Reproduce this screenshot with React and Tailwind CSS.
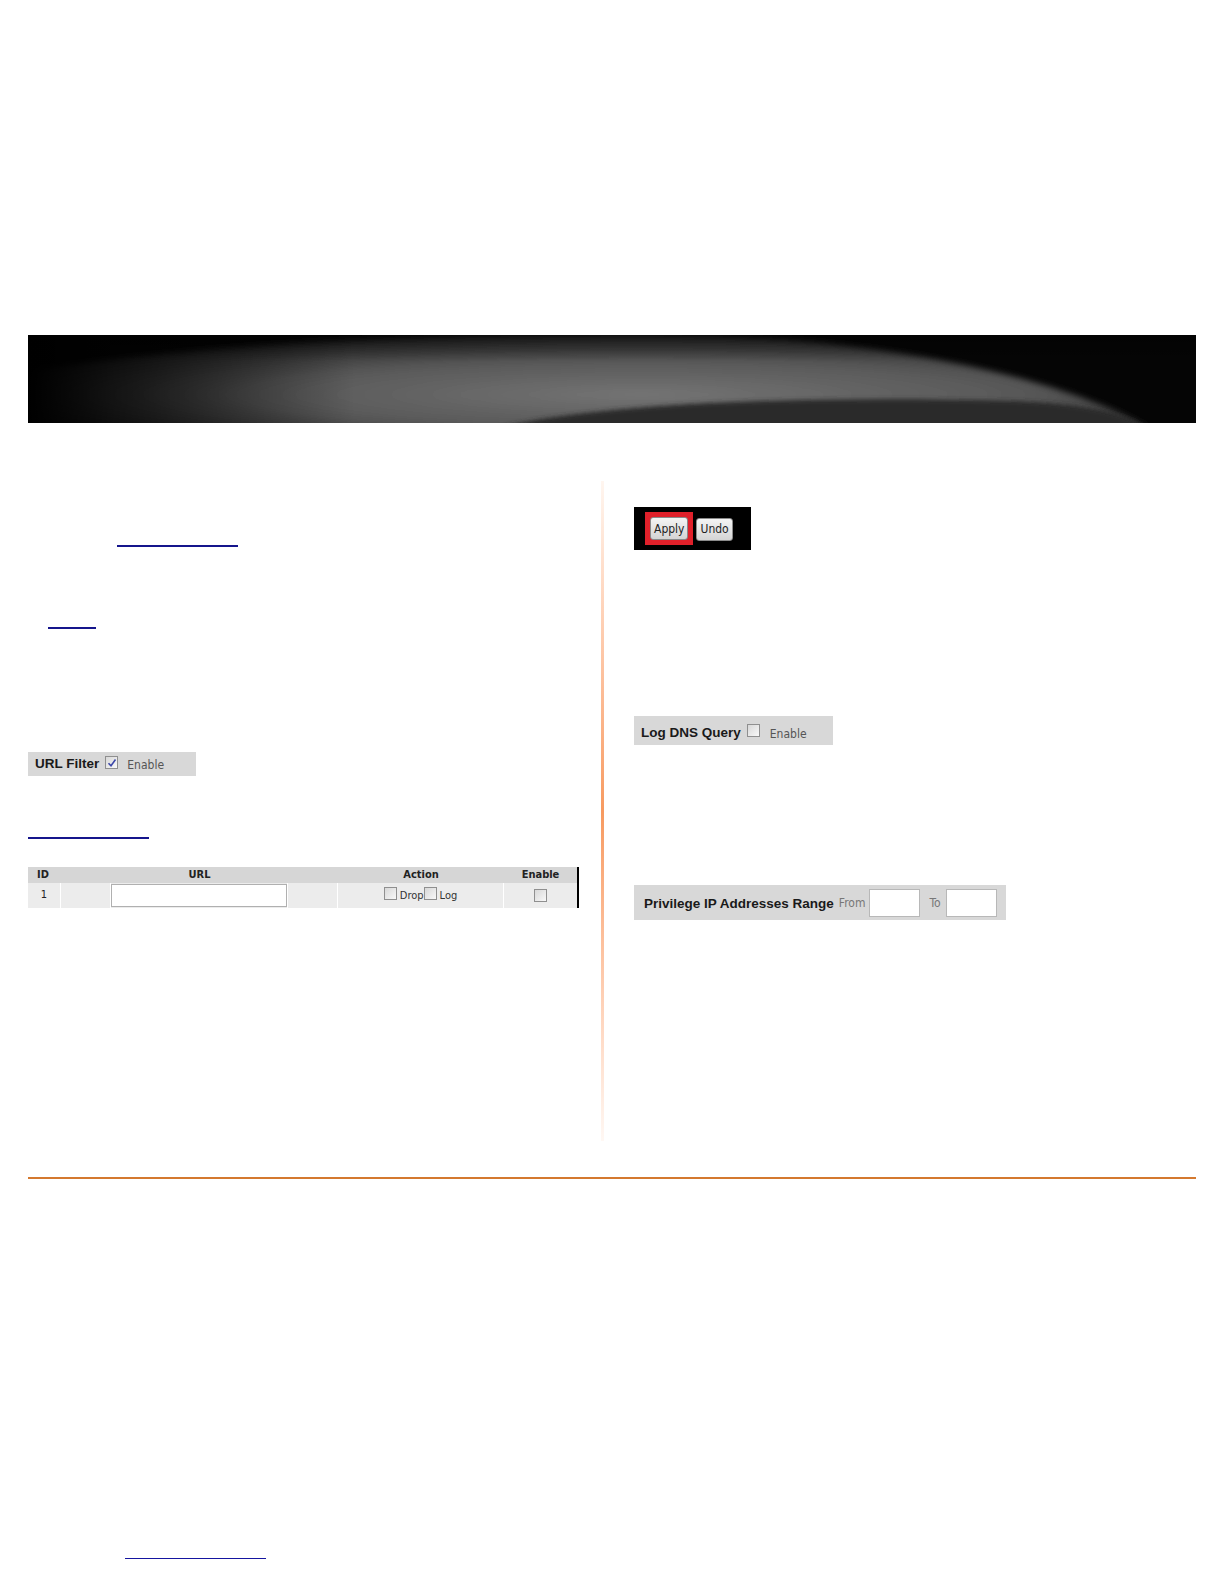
import React from "react";

const F = { fontFamily: '"DejaVu Sans Condensed", "Liberation Sans", sans-serif' };
const B = { fontFamily: '"Liberation Sans", sans-serif' };

function Box({ checked }) {
  return (
    <span className="inline-flex h-[13px] w-[13px] items-center justify-center border border-[#8f8f8f] bg-gradient-to-br from-[#d8d8d8] to-[#f8f8f8] align-middle">
      {checked && (
        <svg width="10" height="10" viewBox="0 0 10 10">
          <path d="M1.5 5.2 L4 7.8 L8.5 1.5" fill="none" stroke="#3b46a8" strokeWidth="1.6" />
        </svg>
      )}
    </span>
  );
}

function Link({ w, ml }) {
  return <div className="h-[2px] bg-[#15158c]" style={{ width: w, marginLeft: ml }} />;
}

function Banner() {
  return (
    <div className="mx-[28px] h-[88px] overflow-hidden bg-black">
      <svg className="block" width="100%" height="100%" viewBox="0 0 1160 88" preserveAspectRatio="none">
        <defs>
          <radialGradient id="g1" cx="0.55" cy="0.6" r="0.6">
            <stop offset="0" stopColor="#747474" />
            <stop offset="0.55" stopColor="#585858" />
            <stop offset="1" stopColor="#222" />
          </radialGradient>
          <linearGradient id="lf" x1="0" x2="1" y1="0" y2="0">
            <stop offset="0" stopColor="#000" stopOpacity="1" />
            <stop offset="0.07" stopColor="#000" stopOpacity="0.7" />
            <stop offset="0.28" stopColor="#000" stopOpacity="0" />
          </linearGradient>
          <linearGradient id="tf" x1="0" x2="0" y1="0" y2="1">
            <stop offset="0" stopColor="#000" stopOpacity="0.4" />
            <stop offset="0.3" stopColor="#000" stopOpacity="0" />
          </linearGradient>
          <filter id="b1" x="-10%" y="-50%" width="120%" height="200%">
            <feGaussianBlur stdDeviation="3" />
          </filter>
          <filter id="b2" x="-10%" y="-50%" width="120%" height="200%">
            <feGaussianBlur stdDeviation="2" />
          </filter>
        </defs>
        <rect width="1160" height="88" fill="#050505" />
        <path d="M -20 100 L -20 40 C 150 8, 400 -2, 620 -1 C 850 0, 1040 45, 1125 100 Z" fill="url(#g1)" filter="url(#b1)" />
        <path d="M 440 100 C 540 68, 760 60, 980 66 C 1060 70, 1100 80, 1118 100 Z" fill="#2c2c2c" filter="url(#b2)" />
        <rect width="1160" height="88" fill="url(#lf)" />
        <rect width="1160" height="88" fill="url(#tf)" />
      </svg>
    </div>
  );
}

function Btn({ children }) {
  return (
    <span className="inline-flex h-[23px] items-center rounded-[3px] border border-[#8a8a8a] bg-gradient-to-b from-[#f4f4f4] to-[#d4d4d4] px-[3px] text-[12px] text-[#222]" style={F}>
      {children}
    </span>
  );
}

export default function App() {
  return (
    <div className="w-full h-[1584px] overflow-hidden bg-white" style={F}>
      <div className="h-[335px]" />
      <Banner />
      <div className="flex">
        {/* left column */}
        <div className="ml-[28px] w-[552px] shrink-0">
          <div className="h-[122px]" />
          <Link w={121} ml={89} />
          <div className="h-[80px]" />
          <Link w={48} ml={20} />
          <div className="h-[123px]" />
          <div className="flex h-[24px] w-[168px] items-center bg-[#d8d8d8] pl-[7px]">
            <span className="text-[13.5px] font-bold text-[#1a1a1a]" style={B}>URL Filter</span>
            <span className="ml-[6px] -mt-[4px]"><Box checked /></span>
            <span className="ml-[9px] mt-[1px] text-[12px] text-[#555]">Enable</span>
          </div>
          <div className="h-[61px]" />
          <Link w={121} ml={0} />
          <div className="h-[28px]" />
          {/* table */}
          <div className="w-[551px] border-r-2 border-black text-[11px] text-[#222]">
            <div className="grid h-[16px] grid-cols-[33px_277px_166px_73px] items-center bg-[#d6d6d6] font-bold">
              <div className="pl-[9px]">ID</div>
              <div className="text-center">URL</div>
              <div className="text-center">Action</div>
              <div className="text-center">Enable</div>
            </div>
            <div className="grid h-[25px] grid-cols-[32px_49px_176px_49px_165px_73px] gap-x-px bg-white">
              <div className="flex items-center justify-center bg-[#ececec]">1</div>
              <div className="bg-[#ececec]" />
              <div className="flex items-center bg-[#ececec]">
                <div className="h-[23px] w-[176px] border border-[#b0b0b0] bg-white" />
              </div>
              <div className="bg-[#ececec]" />
              <div className="flex items-center justify-center bg-[#ececec] text-[11px] text-[#333]">
                <span className="-mt-[3px]"><Box /></span>
                <span className="ml-[3px] mt-[2px]">Drop</span>
                <span className="-mt-[3px]"><Box /></span>
                <span className="ml-[3px] mt-[2px]">Log</span>
              </div>
              <div className="flex items-center justify-center bg-[#ececec]"><Box /></div>
            </div>
          </div>
        </div>

        {/* divider */}
        <div className="ml-[21px] mt-[58px] h-[660px] w-[3px] bg-gradient-to-b from-[#fff6f0] via-[#f79a60] to-[#fff8f4]" />

        {/* right column */}
        <div className="ml-[30px] flex-1">
          <div className="h-[84px]" />
          <div className="flex h-[43px] w-[117px] items-center bg-black pl-[11px]">
            <div className="flex h-[33px] items-center bg-[#e0202a] px-[5px]">
              <Btn>Apply</Btn>
            </div>
            <div className="ml-[3px]"><Btn>Undo</Btn></div>
          </div>
          <div className="h-[166px]" />
          <div className="flex h-[29px] w-[199px] items-center bg-[#d8d8d8] pl-[7px] pt-[6px]">
            <span className="text-[13.5px] font-bold text-[#1a1a1a]" style={B}>Log DNS Query</span>
            <span className="ml-[6px] -mt-[8px]"><Box /></span>
            <span className="ml-[10px] text-[12px] text-[#555]">Enable</span>
          </div>
          <div className="h-[140px]" />
          <div className="flex h-[35px] w-[372px] items-center bg-[#d8d8d8] pl-[10px]">
            <span className="mt-[3px] text-[13.5px] font-bold text-[#1a1a1a]" style={B}>Privilege IP Addresses Range</span>
            <span className="ml-[5px] text-[12px] text-[#777]">From</span>
            <div className="ml-[4px] h-[28px] w-[51px] border border-[#b8b8b8] bg-white" />
            <span className="ml-[9px] text-[12px] text-[#777]">To</span>
            <div className="ml-[5px] h-[28px] w-[51px] border border-[#b8b8b8] bg-white" />
          </div>
        </div>
      </div>

      <div className="mx-[28px] mt-[36px] h-[2px] bg-[#d4792f]" />
      <div className="ml-[125px] mt-[379px] h-[1px] w-[141px] bg-[#1515a0]" />
    </div>
  );
}
